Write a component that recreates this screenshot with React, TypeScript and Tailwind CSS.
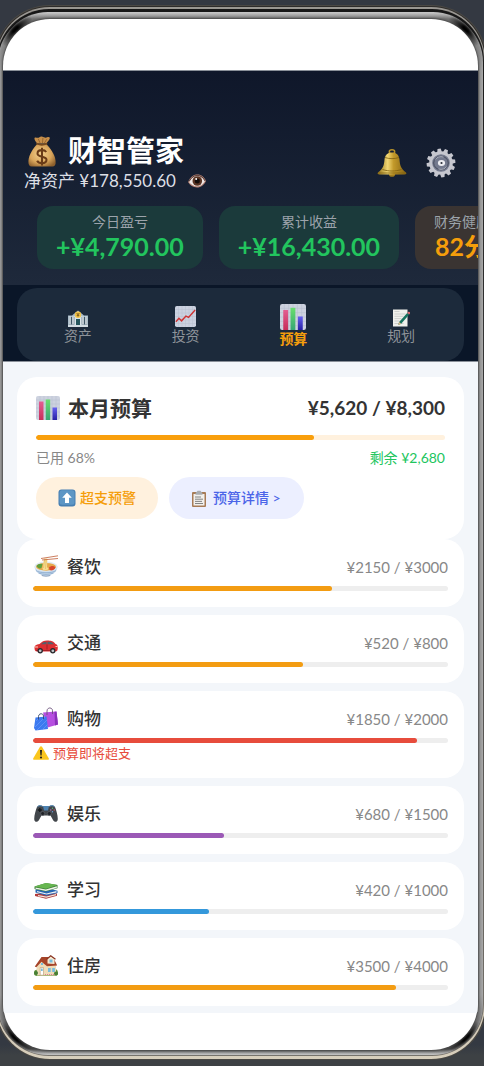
import React from "react";

type IconProps = { className?: string };

const MoneyBag = ({ className }: IconProps) => (
  <svg viewBox="0 0 32 34" className={className} aria-hidden="true">
    <defs>
      <radialGradient id="bag" cx=".45" cy=".45" r=".65">
        <stop offset="0" stopColor="#f3d08e" />
        <stop offset=".6" stopColor="#d9a55b" />
        <stop offset="1" stopColor="#8d5f2c" />
      </radialGradient>
    </defs>
    <path d="M11 8.500C9 6 7.500 3.800 8 2.500 9 1.200 11 2.800 12.500 2.200 14 1.300 15 .8 16.500 1.200 18 1.500 19.500 3 21.500 1.800 23.800 1 25 2 24 4 23 6 21 7.500 20.500 8.500Z" fill="#c78f4a" />
    <path d="M12 3.500 14 8M17 2.500 16.500 8M21 4 18.500 8" stroke="#8b5b27" strokeWidth=".8" />
    <path d="M11 9C7 13 2 20 1.500 27c-.2 4 1.200 6 3.500 6h22c2.500 0 4-2 3.500-6C30 20 24.500 13 20.500 9Z" fill="url(#bag)" />
    <path d="M10.500 8.800c3 1.200 7.500 1.200 10.500 0" stroke="#76491e" strokeWidth="1.800" fill="none" strokeLinecap="round" />
    <path d="M20.500 17.500c-1-1.500-2.500-2-4.500-2-3 0-4.800 1.300-4.800 3.500 0 4.800 9.600 2.200 9.600 6.800 0 2.200-2 3.600-4.800 3.600-2.500 0-4.300-.8-5.200-2.600M16 13v19" stroke="#6a3b17" strokeWidth="2.200" fill="none" />
  </svg>
);

const Eye = ({ className }: IconProps) => (
  <svg viewBox="0 0 18 14" className={className} aria-hidden="true">
    <path d="M0 8C3 2 6 .5 9.500.5 13.500.5 16 3 18 7c-2 4-5 6.500-9 6.500C5 13.500 2 11 0 8Z" fill="#b98678" />
    <path d="M1 8c3-4.500 5-6 8.500-6 3.300 0 5.500 2 7.500 5-2 3.500-4.500 5.300-8 5.300S3 10.500 1 8Z" fill="#eee8e6" />
    <circle cx="9.300" cy="7" r="4.800" fill="#5b3524" />
    <circle cx="9.300" cy="7" r="2.500" fill="#120b09" />
    <circle cx="8.200" cy="5" r="1" fill="#fff" />
    <path d="M1 7.500C4 3 6 1.500 9.500 1.500S15.500 3.800 17 7" stroke="#3b2520" strokeWidth=".8" fill="none" />
  </svg>
);

const Bell = ({ className }: IconProps) => (
  <svg viewBox="0 0 30 28" className={className} aria-hidden="true">
    <defs>
      <linearGradient id="bell" x1="0" x2="1">
        <stop offset="0" stopColor="#8f6e14" />
        <stop offset=".35" stopColor="#f2d774" />
        <stop offset=".55" stopColor="#c39a2b" />
        <stop offset="1" stopColor="#856211" />
      </linearGradient>
    </defs>
    <ellipse cx="15" cy="2.800" rx="2.700" ry="2" stroke="#b8922a" strokeWidth="1.500" fill="none" />
    <ellipse cx="15" cy="25.500" rx="3" ry="2.300" fill="#a17c1c" />
    <path d="M15 3.500c-5 0-7 3-7.500 7C7 16 6.500 19.500 1 23.500c-1 1 0 2 1.500 2h25c1.500 0 2.500-1 1.500-2C23.500 19.500 23 16 22.500 10.500 22 6.500 20 3.500 15 3.500Z" fill="url(#bell)" />
    <path d="M8 8.500c4 1.500 10 1.500 14 0M5.500 20.500c6 2 13 2 19 0M1.500 24h27" stroke="#7e5f12" strokeWidth=".8" fill="none" />
  </svg>
);

const TEETH = [0, 30, 60, 90, 120, 150, 180, 210, 240, 270, 300, 330];
const Gear = ({ className }: IconProps) => (
  <svg viewBox="0 0 30 30" className={className} aria-hidden="true">
    {TEETH.map((a) => (
      <path key={a} d="M12.800 4 13.500.6h3.200L17.400 4Z" fill="#c6c7cf" transform={`rotate(${a - 8} 15 15)`} />
    ))}
    <circle cx="15" cy="15" r="10.300" fill="#747a8e" stroke="#c6c7cf" strokeWidth="3" />
    <ellipse cx="15" cy="15" rx="7.300" ry="6.800" fill="none" stroke="#474c5d" strokeWidth="1" />
    <path d="M9.500 11.500C11 9 14 8 17.500 9M20.500 18.500c-1.500 2.500-4.500 3.500-8 2.500" stroke="#a9adba" strokeWidth="1" fill="none" />
    <ellipse cx="15.500" cy="15" rx="3.600" ry="3" fill="#ededf1" />
    <circle cx="15.500" cy="15" r="1.100" fill="#2c303c" />
  </svg>
);

const Bank = ({ className }: IconProps) => (
  <svg viewBox="0 0 20 17" className={className} aria-hidden="true">
    <path d="M0 5.500h4L10 .5l6 5h4V17H0Z" fill="#a9bcc8" />
    <path d="M1 7h18v7.500H1Z" fill="#405766" />
    <path d="M2 6.500v8M5 6.500v8M15 6.500v8M18 6.500v8" stroke="#e5edf1" strokeWidth="1.500" />
    <path d="M6.300 6h7.400v9H6.300Z" fill="#d9e3e8" />
    <path d="M8 9h4v6H8Z" fill="#24555c" />
    <circle cx="10" cy="4.700" r="3.200" fill="#f1c34b" />
    <path d="m8.700 3 1.300 1.700L11.300 3M10 4.700v2M8.700 5.300h2.600" stroke="#6b4a12" strokeWidth=".8" fill="none" />
    <path d="M0 15h20v2H0Z" fill="#d3dde3" />
  </svg>
);

const GridLines = () => (
  <path d="M0 4h24M0 8h24M0 12h24M0 16h24M0 20h24M4 0v24M8 0v24M12 0v24M16 0v24M20 0v24" stroke="#b7bece" strokeWidth=".5" />
);

const Trend = ({ className }: IconProps) => (
  <svg viewBox="0 0 24 24" className={className} aria-hidden="true">
    <rect width="24" height="24" rx="2" fill="#cbd2e0" />
    <GridLines />
    <path d="m1 18 3.500-4 3 3 5-5.500 3 1.500L23 4.500" stroke="#cf3434" strokeWidth="1.700" fill="none" />
  </svg>
);

const Bars = ({ className }: IconProps) => (
  <svg viewBox="0 0 24 24" className={className} aria-hidden="true">
    <defs>
      <linearGradient id="b1" x2="0" y2="1"><stop stopColor="#e35d92" /><stop offset="1" stopColor="#c72e59" /></linearGradient>
      <linearGradient id="b2" x2="0" y2="1"><stop stopColor="#69e06d" /><stop offset="1" stopColor="#36a575" /></linearGradient>
      <linearGradient id="b3" x2="0" y2="1"><stop stopColor="#6660ef" /><stop offset="1" stopColor="#2720a4" /></linearGradient>
    </defs>
    <rect width="24" height="24" rx="2" fill="#cdd2df" />
    <GridLines />
    <path d="M3 5.500h4.500V24H3Z" fill="url(#b1)" />
    <path d="M9.700 3.500h4.500V24H9.700Z" fill="url(#b2)" />
    <path d="M16.500 11.500H21V24h-4.500Z" fill="url(#b3)" />
  </svg>
);

const Memo = ({ className }: IconProps) => (
  <svg viewBox="0 0 18 18" className={className} aria-hidden="true">
    <path d="M1 .5h14.500v17H1Z" fill="#f0f0ec" />
    <path d="M2.500 2.500h5M2.500 5h11M2.500 7.300h9M2.500 9.600h7M2.500 12h5M2.500 14.500h9" stroke="#b7babb" strokeWidth=".6" />
    <path d="m15.200 4 2 1.600-8 9.200-3 1.300.9-3.200Z" fill="#17735f" />
    <path d="m15.200 4 1-1.100c1-.7 2.500.6 1.900 1.600l-.9 1.100Z" fill="#dd6c72" />
    <path d="m7.100 12.900-.9 3.200 3-1.300Z" fill="#e8bc85" />
  </svg>
);

const UpArrow = ({ className }: IconProps) => (
  <svg viewBox="0 0 18 18" className={className} aria-hidden="true">
    <rect x=".5" y=".5" width="17" height="17" rx="3" fill="#477fb2" />
    <rect x="1.500" y="1.300" width="15" height="14.500" rx="2.500" fill="#5d96c5" />
    <path d="m9 3.500 4.800 5.300H11V14H7V8.800H4.200Z" fill="#fff" />
  </svg>
);

const Clipboard = ({ className }: IconProps) => (
  <svg viewBox="0 0 14 17" className={className} aria-hidden="true">
    <rect y="2" width="14" height="15" rx="1" fill="#a77b56" />
    <path d="M1.500 4h11v11.500h-11Z" fill="#f2f0ed" />
    <path d="M3.500 3.500C4 1.500 5 2 5.500.7h3C9 2 10 1.500 10.500 3.500v1.300h-7Z" fill="#a8abb0" />
    <path d="M3 7h6M3 9.200h8M3 11.400h7M3 13.500h8" stroke="#777" strokeWidth=".9" />
  </svg>
);

const Noodles = ({ className }: IconProps) => (
  <svg viewBox="0 0 24 24" className={className} aria-hidden="true">
    <ellipse cx="12" cy="20.300" rx="4.500" ry="1.400" fill="#93a9c4" />
    <path d="M.5 11.500C1 17 5 20.500 12 20.500S23 17 23.500 11.500Z" fill="#c9dbed" />
    <path d="M2 15.500c3 3 17 3 20 0M4.500 18c4 1.800 11 1.800 15 0" stroke="#7d9fc6" strokeWidth=".7" fill="none" />
    <ellipse cx="12" cy="11.500" rx="11.500" ry="5" fill="#dfebf4" />
    <ellipse cx="12" cy="11.800" rx="10" ry="3.900" fill="#e7a84a" />
    <path d="M2.500 11c1-2 4-2.500 6-2l-1 4c-2 1-4 0-5-2Z" fill="#5fa03e" />
    <path d="M15 12.500c2-2 5-2 6.500 0-1 2.500-4 3.500-6 2.500Z" fill="#d9492e" />
    <path d="M8.500 13.500 10 3.500h3.500l-.5 9c2 0 2 2.500-1 2.800-2 .2-4-1-3.500-1.800Z" fill="#f6dc90" />
    <path d="m10.500 5-1 8M12.200 5l-.7 9" stroke="#dcae4e" strokeWidth=".5" />
    <path d="m7 3.500 17-2.700M8 5 24 3.500" stroke="#bf5d36" strokeWidth=".8" />
  </svg>
);

const Car = ({ className }: IconProps) => (
  <svg viewBox="0 0 24 24" className={className} aria-hidden="true">
    <path d="M.5 16.500c0-2 1.500-3 5-3.500C8 10.500 10 9.500 13 9.500c4 0 6.500.5 8.500 3.500 2 .5 2.300 2 2.300 4 0 2.500-.8 3.500-2.300 3.500H3C1 20.500.5 19 .5 16.500Z" fill="#dc2f32" />
    <path d="M7 13.200c2-1.800 3.500-2.500 5.500-2.500v2.600ZM13.500 10.700c3 0 5 .5 6.500 2.500l-6.500.1Z" fill="#52606b" />
    <path d="M1 16h3M21.500 15.500h2" stroke="#ffcdb4" strokeWidth="1.200" />
    <path d="M2 19.500h19M13 13.500v5" stroke="#8c1b22" strokeWidth=".7" />
    <circle cx="6.200" cy="19.800" r="2.700" fill="#29292d" /><circle cx="18.800" cy="19.800" r="2.700" fill="#29292d" />
    <circle cx="6.200" cy="19.800" r="1.400" fill="#bfc4c8" /><circle cx="18.800" cy="19.800" r="1.400" fill="#bfc4c8" />
  </svg>
);

const Bags = ({ className }: IconProps) => (
  <svg viewBox="0 0 24 24" className={className} aria-hidden="true">
    <path d="m9 5.500 13.500-1L24 17.500l-10.500 3Z" fill="#b64fe0" />
    <path d="m22.500 4.500 1.500 13-3 .9-.5-13.700Z" fill="#8a31b8" />
    <path d="M13 8V4c0-4 5.500-4 5.500-.3V7" stroke="#6b507b" strokeWidth=".9" fill="none" />
    <path d="m1.500 10.500 11-1 1.500 12.500-12.500 1.500L0 21Z" fill="#3c7af0" />
    <path d="m2 14 4-4M1 20l10-10M3 23l10-10M8.500 22.500l5-5" stroke="#6496f8" strokeWidth=".8" />
    <path d="M4.500 12.500v-3c0-3.500 5-3.700 5-.4v3" stroke="#33456b" strokeWidth=".9" fill="none" />
  </svg>
);

const Gamepad = ({ className }: IconProps) => (
  <svg viewBox="0 0 24 24" className={className} aria-hidden="true">
    <path d="M3 5c1-2 4-2.500 6-.8h6c2-1.700 5-1.200 6 .8 1.500 3.500 3.500 11 2.500 13.500-.8 2-3.500 1.500-4.500-.5l-2.500-4.500h-9L5 18C4 20 1.300 20.500.5 18.500-.5 16 1.500 8.500 3 5Z" fill="#42464b" />
    <path d="M9 4h6l-1 4.500h-4Z" fill="#4d82b1" />
    <path d="M3.500 4.800c1.500-1.500 3.500-1.500 5-.3M15.500 4.500c1.500-1.200 3.500-1.200 5 .3" stroke="#5b9bd0" strokeWidth=".9" fill="none" />
    <path d="M5.800 6v4M3.800 8h4" stroke="#15181b" strokeWidth="1.300" />
    <circle cx="8.700" cy="11.500" r="2" fill="#202327" stroke="#656a70" strokeWidth=".6" /><circle cx="15.300" cy="11.500" r="2" fill="#202327" stroke="#656a70" strokeWidth=".6" />
    <circle cx="18.500" cy="6.200" r=".7" fill="#65b37c" /><circle cx="20.200" cy="8" r=".7" fill="#cf5962" /><circle cx="16.800" cy="8" r=".7" fill="#b876b9" /><circle cx="18.500" cy="9.700" r=".7" fill="#699fdc" />
  </svg>
);

const Books = ({ className }: IconProps) => (
  <svg viewBox="0 0 24 24" className={className} aria-hidden="true">
    <path d="m1 16 12-1.500 10 1v2.200l-11 3L1 18Z" fill="#b23c3c" />
    <path d="m4 17.100 8.300 1.500 9.700-2.700v1.300l-9.700 2.600L4 18.200Z" fill="#f0e8db" />
    <path d="m1.500 11.500 12-1.500 10 2.700V15l-11 2.700-11-3.200Z" fill="#2868b5" />
    <path d="m3 13 9.500 2.500 10-2.500v1.400l-10 2.100L3 14.200Z" fill="#eef0f1" />
    <path d="M.5 8.500 12 5l11.500 2v3.300l-12 3.200L.5 11Z" fill="#3f8239" />
    <path d="m1.500 9.500 10.300 2 11-3.200V10l-11 2.900-10.300-2.200Z" fill="#f0f2e9" />
    <path d="M.5 8.500 12 5l11.500 2L12 10.700Z" fill="#67b650" />
  </svg>
);

const House = ({ className }: IconProps) => (
  <svg viewBox="0 0 24 24" className={className} aria-hidden="true">
    <path d="M0 19c0-3 2-4 4-3l16-.5c3-1 4 1 4 4 0 2-2 2.500-4 2.500H3c-2 0-3-1-3-3Z" fill="#649741" />
    <path d="M2.500 11 8 6l12-1 2 6v10.500h-19Z" fill="#efdcb8" />
    <path d="M.8 12.500 7.500 3H19l4.200 8.500-10.200.7L7.500 7.800l-5.200 5.400Z" fill="#a54429" />
    <path d="M13.500 9.500V5.200L16.800 2 20.500 5v5Z" fill="#f4ead3" /><path d="m12.500 5.300 4.200-3.500L21.500 5.300" stroke="#893421" strokeWidth="1.100" fill="none" />
    <path d="M15.500 5.500h3v3h-3ZM14 14h2.700v4H14ZM18.200 14h2.700v4h-2.700Z" fill="#77bddc" />
    <path d="M6.200 13.500h3.300v7.700H6.200Z" fill="#fff" stroke="#b89872" strokeWidth=".6" />
    <path d="M7 14.500h1.700v2.500H7ZM7 9h2v2H7Z" fill="#77bddc" />
    <circle cx="2" cy="19" r="2" fill="#477f34" /><circle cx="22" cy="19.500" r="2" fill="#477f34" />
    <path d="M11 20.500h9" stroke="#dd8195" strokeWidth="1.200" strokeDasharray="1 1" />
  </svg>
);

const Warning = ({ className }: IconProps) => (
  <svg viewBox="0 0 16 14" className={className} aria-hidden="true">
    <path d="M7 .8c.5-.8 1.500-.8 2 0l6.700 11.500c.4.8 0 1.500-.9 1.500H1.200c-.9 0-1.300-.7-.9-1.500Z" fill="#fac61d" />
    <path d="M7 4h2l-.4 5.500H7.400Z" fill="#29251c" /><circle cx="8" cy="11.500" r="1.100" fill="#29251c" />
  </svg>
);

const stats = [
  { label: "今日盈亏", value: "+¥4,790.00", box: "bg-[#1b3a3b]", text: "text-[#22c55e]" },
  { label: "累计收益", value: "+¥16,430.00", box: "bg-[#1b3a3b]", text: "text-[#22c55e]" },
  { label: "财务健康", value: "82分", box: "bg-[#3a3432]", text: "text-[#f59e0b]" },
];

const tabs = [
  { label: "资产", Icon: Bank, size: "h-[17px] w-5", active: false },
  { label: "投资", Icon: Trend, size: "size-[21px]", active: false },
  { label: "预算", Icon: Bars, size: "size-[26px]", active: true },
  { label: "规划", Icon: Memo, size: "size-[18px]", active: false },
];

const categories = [
  { name: "餐饮", Icon: Noodles, spent: 2150, limit: 3000, used: 72, color: "bg-[#f39c12]", warn: false },
  { name: "交通", Icon: Car, spent: 520, limit: 800, used: 65, color: "bg-[#f39c12]", warn: false },
  { name: "购物", Icon: Bags, spent: 1850, limit: 2000, used: 92.5, color: "bg-[#e74c3c]", warn: true },
  { name: "娱乐", Icon: Gamepad, spent: 680, limit: 1500, used: 46, color: "bg-[#9b59b6]", warn: false },
  { name: "学习", Icon: Books, spent: 420, limit: 1000, used: 42.5, color: "bg-[#3498db]", warn: false },
  { name: "住房", Icon: House, spent: 3500, limit: 4000, used: 87.5, color: "bg-[#f39c12]", warn: false },
];

function Progress({ percent, track, fill, label }: { percent: number; track: string; fill: string; label: string }) {
  return (
    <div
      role="progressbar"
      aria-label={label}
      aria-valuenow={Math.round(percent)}
      className={`h-[5px] overflow-hidden rounded-full ${track}`}
    >
      <div className={`h-full rounded-full ${fill}`} style={{ width: `${percent}%` }} />
    </div>
  );
}

function Header() {
  return (
    <header className="border-t border-[#8a9099] bg-linear-to-b from-[#0f172a] to-[#1e293b] pt-[62px] pb-4">
      <div className="flex items-center justify-between pr-[22px] pl-[21px]">
        <div>
          <h1 className="flex h-[36px] items-center gap-[11px] pl-[3px] text-[29px] leading-[36px] font-bold text-white">
            <MoneyBag className="h-[33px] w-[30px]" />
            <span>财智管家</span>
          </h1>
          <p className="flex h-6 items-center gap-3 text-[17px] leading-6 text-[#dcdfe5]">
            <span>净资产 ¥178,550.60</span>
            <button type="button" aria-label="显示或隐藏金额">
              <Eye className="h-3.5 w-[18px]" />
            </button>
          </p>
        </div>
        <div className="flex gap-[19px]">
          <button type="button" aria-label="通知">
            <Bell className="h-7 w-[30px]" />
          </button>
          <button type="button" aria-label="设置">
            <Gear className="size-[30px]" />
          </button>
        </div>
      </div>
      <div className="mt-[13px] flex gap-4 overflow-x-auto pl-[34px] [scrollbar-width:none]">
        {stats.map((s) => (
          <div key={s.label} className={`flex h-[63px] shrink-0 flex-col items-center rounded-2xl px-[19px] pt-1.5 ${s.box}`}>
            <div className="text-sm leading-5 text-[#9ca3ab]">{s.label}</div>
            <div className={`text-[25px] leading-[29px] font-bold ${s.text}`}>{s.value}</div>
          </div>
        ))}
      </div>
    </header>
  );
}

function Tabs() {
  return (
    <div className="border-b border-[#8a9099] bg-[#0a1628] px-3.5 pt-[3px]">
      <nav className="grid h-[73px] grid-cols-4 rounded-[20px] bg-[#1c2a3b] pt-4 pr-[9px] pl-[7px]">
        {tabs.map(({ label, Icon, size, active }) => (
          <button key={label} type="button" className="flex flex-col items-center">
            <span className={`flex items-end justify-center ${active ? "h-[26px]" : "h-[23px]"}`}>
              <Icon className={size} />
            </span>
            <span className={`text-sm leading-[18px] ${active ? "font-bold text-[#f59e0b]" : "text-[#8e9399]"}`}>{label}</span>
          </button>
        ))}
      </nav>
    </div>
  );
}

function Summary() {
  return (
    <section className="h-[162px] rounded-[20px] bg-white px-[19px] pt-4">
      <div className="flex h-[30px] items-center justify-between text-[#333]">
        <h2 className="flex items-center gap-2 text-[21px] leading-[30px] font-bold">
          <Bars className="size-6" />
          <span>本月预算</span>
        </h2>
        <span className="text-[19px] leading-[30px] font-bold">¥5,620 / ¥8,300</span>
      </div>
      <div className="mt-3">
        <Progress percent={68} track="bg-[#fff1de]" fill="bg-[#f99f0c]" label="本月预算" />
      </div>
      <div className="mt-2 flex justify-between text-sm leading-5">
        <span className="text-[#888]">已用 68%</span>
        <span className="text-[#22c55e]">剩余 ¥2,680</span>
      </div>
      <div className="mt-[9px] flex gap-[11px]">
        <button type="button" className="flex h-[42px] items-center gap-1 rounded-full bg-[#fff1de] px-[22px] text-sm font-medium text-[#f59e0b]">
          <UpArrow className="size-[18px]" />
          <span>超支预警</span>
        </button>
        <button type="button" className="flex h-[42px] items-center gap-[7px] rounded-full bg-[#ecefff] px-[23px] text-sm font-medium text-[#4a64e8]">
          <Clipboard className="h-[17px] w-3.5" />
          <span>预算详情 &gt;</span>
        </button>
      </div>
    </section>
  );
}

export default function App() {
  return (
    <div className="min-h-screen overflow-hidden bg-linear-to-b from-[#343942] from-98% to-[#3d4144] to-99% pt-[5px] pb-1.5 font-[Lato,'Noto_Sans_CJK_SC',sans-serif]">
      <div className="-mr-[3px] -ml-1.5 rounded-[56px] bg-[#4a4844] p-px">
        <div className="rounded-[55px] bg-linear-to-b from-[#2e2c2a] to-[#3d3b37] px-px pt-px">
          <div className="rounded-[54px] bg-linear-to-b from-[#9a9792] via-[#777] to-[#d8cfbc] px-px pt-0.5 pb-[3px]">
            <div className="rounded-[52px] bg-linear-to-b from-[#171717] via-[#444] to-[#77736c] px-px pt-[3px] pb-px">
              <div className="rounded-[50px] bg-[radial-gradient(circle_at_17px_17px,#000_3px,transparent_20px),radial-gradient(circle_at_calc(100%-17px)_17px,#000_3px,transparent_20px),radial-gradient(circle_at_17px_calc(100%-17px),#000_3px,transparent_20px),radial-gradient(circle_at_calc(100%-17px)_calc(100%-17px),#000_3px,transparent_20px),linear-gradient(to_bottom,#d0d0d0,#707070_7px,#999_60px,#999_calc(100%-60px),#444_calc(100%-6px),#ccc)] px-[5px] pt-[7px] pb-[5px] shadow-[inset_0_0_3px_#bbb]">
                <div className="overflow-hidden rounded-[47px] bg-white pt-[51px] pb-[37px] shadow-[0_0_2px_1px_#4a4a4a]">
                  <Header />
                  <Tabs />
                  <main className="bg-[#f3f6fa] px-3.5 pt-[15px] pb-[7px]">
                    <Summary />
                    <ul className="flex flex-col gap-2">
                      {categories.map(({ name, Icon, spent, limit, used, color, warn }) => (
                        <li key={name} className="rounded-[20px] bg-white p-4">
                          <div className="mb-2 flex h-[23px] items-center justify-between">
                            <h3 className="flex items-center gap-[9px] pl-px text-[17px] leading-6 font-medium text-[#333]">
                              <Icon className="size-6" />
                              <span>{name}</span>
                            </h3>
                            <span className="text-[15px] leading-6 text-[#888]">
                              ¥{spent} / ¥{limit}
                            </span>
                          </div>
                          <Progress percent={used} track="bg-[#eee]" fill={color} label={name} />
                          {warn && (
                            <p className="flex items-center gap-1 pt-px text-[13px] leading-[18px] text-[#e74c3c]">
                              <Warning className="h-3.5 w-4" />
                              <span>预算即将超支</span>
                            </p>
                          )}
                        </li>
                      ))}
                    </ul>
                  </main>
                </div>
              </div>
            </div>
          </div>
        </div>
      </div>
    </div>
  );
}
